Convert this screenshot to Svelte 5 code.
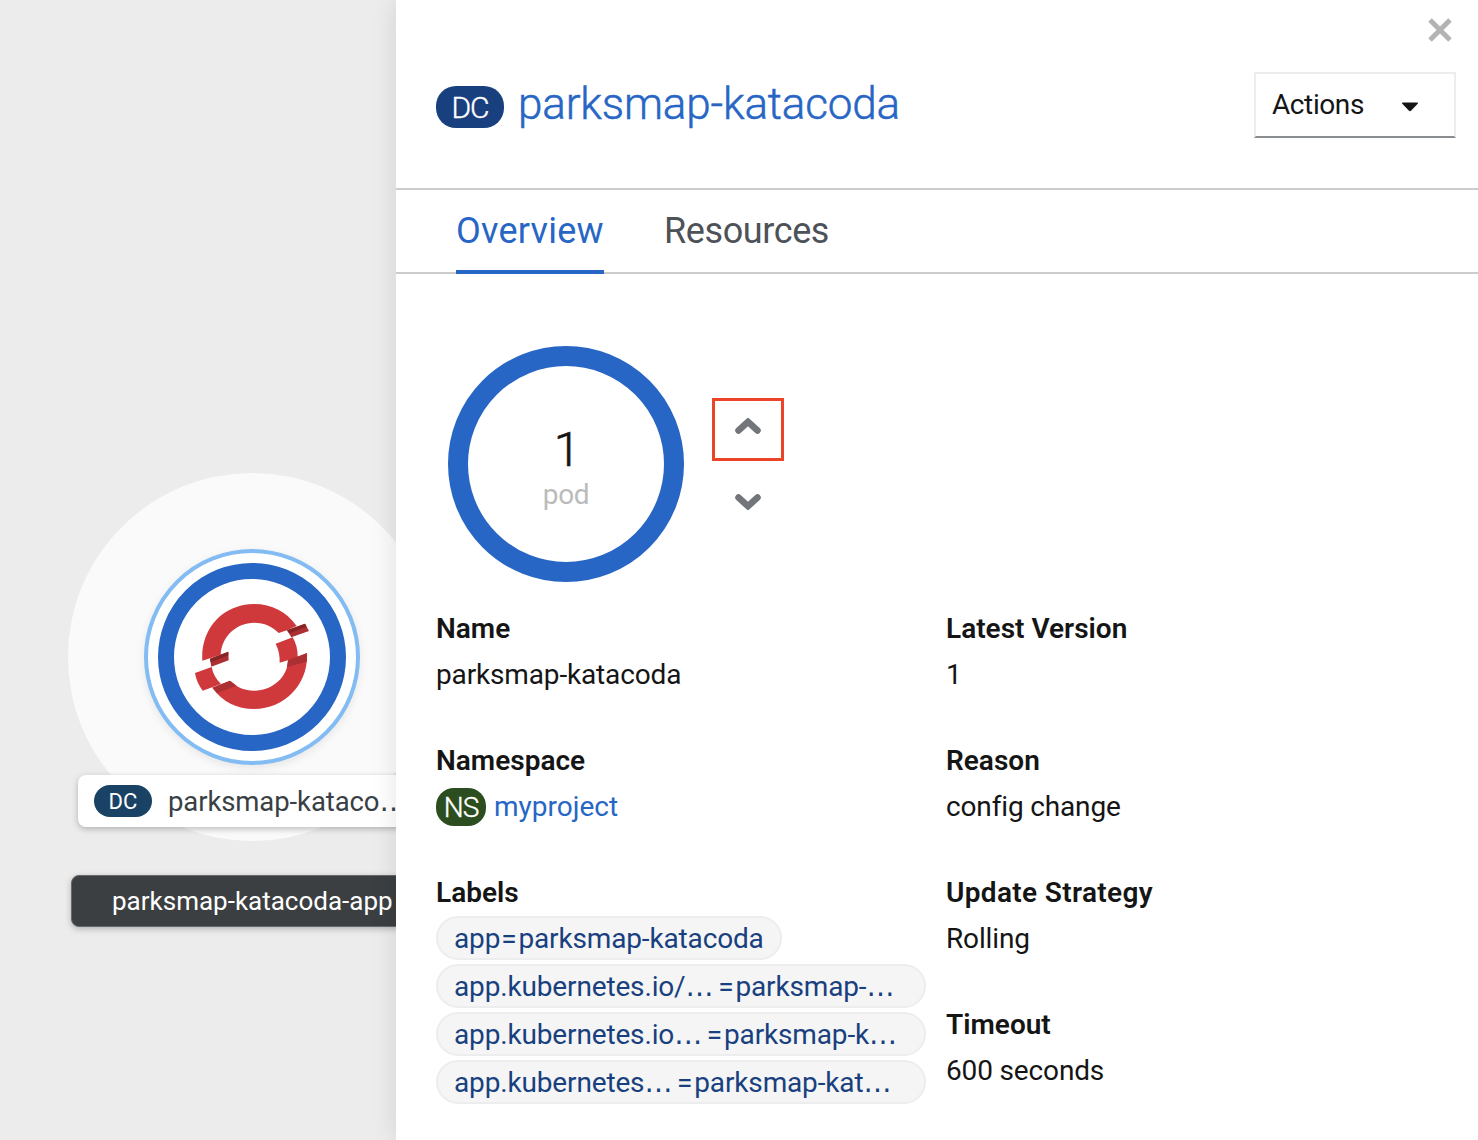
<script>
  const leftDetails = [
    { label: 'Name', value: 'parksmap-katacoda' },
    { label: 'Namespace', value: 'myproject', badge: 'NS' }
  ];
  const rightDetails = [
    { label: 'Latest Version', value: '1' },
    { label: 'Reason', value: 'config change' },
    { label: 'Update Strategy', value: 'Rolling', wide: true },
    { label: 'Timeout', value: '600 seconds' }
  ];
  const labels = [
    { key: 'app', value: 'parksmap-katacoda', truncated: false },
    { key: 'app.kubernetes.io/', value: 'parksmap-', truncated: true },
    { key: 'app.kubernetes.io', value: 'parksmap-k', truncated: true },
    { key: 'app.kubernetes', value: 'parksmap-kat', truncated: true }
  ];
</script>

<div class="page">
  <section class="topology">
    <svg class="graph" viewBox="0 0 396 1140" width="396" height="1140">
      <circle cx="252" cy="657" r="184" fill="#fafafa" />
      <circle class="node-base" cx="252" cy="657" r="106" fill="#fff" stroke="#83bbf3" stroke-width="4" />
      <circle cx="252" cy="657" r="86" fill="none" stroke="#2766c4" stroke-width="16" />
      <g transform="translate(130 540) scale(.33333)">
        <path fill="#cf393c" d="M217 362C211 270 276 192 373 192C425 192 470 215 500 258L471 271L446 279C427 259 403 248 373 248C318 248 275 290 272 344Z" />
        <path fill="#cf393c" d="M503 352L531 339C536 430 466 507 373 507C321 507 277 485 247 443L300 422C320 442 343 452 373 452C428 452 474 410 474 360Z" />
        <path fill="#cf393c" d="M437 311L488 292C498 309 504 329 503 352L449 368C450 347 446 329 437 311Z" />
        <path fill="#cf393c" d="M195 399L245 381C249 402 258 418 273 432L218 452C206 436 198 419 195 399Z" />
        <path fill="#ab2f33" d="M471 271L525 251L537 273L484 292Z" />
        <path fill="#882426" d="M471 271L525 251L530 260L478 280Z" />
        <path fill="#ab2f33" d="M474 360L531 339L530 365L471 381Z" />
        <path fill="#ab2f33" d="M240 356L295 335L296 361L244 380Z" />
        <path fill="#882426" d="M240 356L295 335L295 346L242 367Z" />
        <path fill="#ab2f33" d="M247 443L300 422L320 437L262 459Z" />
      </g>
    </svg>
    <div class="node-label">
      <span class="node-badge">DC</span>
      <span class="node-name">parksmap-kataco<span class="ellipsis">…</span></span>
    </div>
    <div class="group-label">parksmap-katacoda-app</div>
  </section>

  <aside class="panel">
    <header>
      <button class="close" aria-label="Close">
        <svg viewBox="0 0 24 24" width="24" height="24">
          <path d="M2 2L22 22M22 2L2 22" stroke="#b3b3b3" stroke-width="5" />
        </svg>
      </button>
      <div class="heading">
        <span class="badge dc">DC</span>
        <h1>parksmap-katacoda</h1>
        <button class="actions">
          <span>Actions</span>
          <svg viewBox="0 0 18 10" width="18" height="10">
            <path d="M1.6 .5H16.4Q17.6 .7 16.7 1.7L10 8.8Q9 9.7 8 8.8L1.3 1.7Q.4 .7 1.6 .5Z" fill="#151515" />
          </svg>
        </button>
      </div>
    </header>

    <nav>
      <span class="tab active">Overview</span>
      <span class="tab resources">Resources</span>
    </nav>

    <div class="scaling">
      <div class="donut">
        <span class="count">1</span>
        <span class="unit">pod</span>
      </div>
      <div class="steppers">
        <button class="step up" aria-label="Increase">
          <svg viewBox="0 0 26 16" width="26" height="16">
            <path d="M3.5 12.5L13 3.8L22.5 12.5" />
          </svg>
        </button>
        <button class="step" aria-label="Decrease">
          <svg viewBox="0 0 26 16" width="26" height="16">
            <path d="M3.5 3.5L13 12.2L22.5 3.5" />
          </svg>
        </button>
      </div>
    </div>

    <div class="details">
      <dl>
        {#each leftDetails as item}
          <div class="item">
            <dt>{item.label}</dt>
            {#if item.badge}
              <dd class="link"><span class="badge ns">{item.badge}</span><span>{item.value}</span></dd>
            {:else}
              <dd>{item.value}</dd>
            {/if}
          </div>
        {/each}
        <div class="item">
          <dt>Labels</dt>
          <dd class="chips">
            {#each labels as chip}
              <span class="chip" class:full={chip.truncated}>{chip.key}{#if chip.truncated}<span class="ellipsis">…</span>{' '}{/if}<span class="equals">=</span>{chip.value}{#if chip.truncated}<span class="ellipsis">…</span>{/if}</span>
            {/each}
          </dd>
        </div>
      </dl>
      <dl>
        {#each rightDetails as item}
          <div class="item">
            <dt class:wide={item.wide}>{item.label}</dt>
            <dd>{item.value}</dd>
          </div>
        {/each}
      </dl>
    </div>
  </aside>
</div>

<style>
  :global(body) {
    margin: 0;
    overflow: hidden;
  }
  .page {
    display: flex;
    width: 1478px;
    height: 1140px;
    overflow: hidden;
    background: #fff;
    color: #151515;
    font-family: Roboto, 'Liberation Sans', sans-serif;
    font-size: 28px;
    line-height: 42px;
  }
  .page * {
    box-sizing: border-box;
  }
  button {
    padding: 0;
    border: 0;
    background: none;
    font: inherit;
    color: inherit;
  }
  svg {
    display: block;
  }

  .topology {
    position: relative;
    flex: 0 0 396px;
    overflow: hidden;
    background: #ececec;
  }
  .node-base {
    filter: drop-shadow(0 3px 4px rgba(0, 0, 0, 0.08));
  }
  .node-label,
  .group-label {
    position: absolute;
    display: flex;
    align-items: center;
    height: 52px;
    white-space: nowrap;
  }
  .node-label {
    left: 78px;
    top: 775px;
    width: 346px;
    padding-left: 16px;
    gap: 16px;
    border-radius: 8px;
    background: #fff;
    box-shadow: 0 2px 6px rgba(0, 0, 0, 0.25);
    color: #393f44;
    font-size: 27.5px;
  }
  .node-badge {
    width: 58px;
    height: 32px;
    border-radius: 16px;
    background: #1a4264;
    color: #fff;
    font-size: 22px;
    line-height: 33px;
    text-align: center;
  }
  .node-name {
    padding-top: 2px;
    letter-spacing: -0.1px;
  }
  .ellipsis {
    margin-right: -3px;
    font-family: 'DejaVu Sans', sans-serif;
    font-size: 28px;
    line-height: 0;
  }
  .group-label {
    left: 71px;
    top: 875px;
    width: 360px;
    padding-left: 40px;
    border: 1px solid #66696c;
    border-radius: 8px;
    background: #3c3f42;
    box-shadow: 0 2px 6px rgba(0, 0, 0, 0.25);
    color: #fff;
    font-size: 26px;
  }

  .panel {
    position: relative;
    flex: 1;
    display: flex;
    flex-direction: column;
    background: #fff;
    box-shadow: 0 0 24px rgba(0, 0, 0, 0.11);
  }
  .panel > * {
    flex: none;
  }
  header {
    height: 190px;
    padding: 18px 22px 0 40px;
    border-bottom: 2px solid #ccc;
  }
  .close {
    display: block;
    margin: 0 4px 0 auto;
  }
  .heading {
    display: flex;
    align-items: flex-start;
    padding-top: 30px;
  }
  .badge {
    display: inline-block;
    color: #fff;
    font-weight: 300;
    text-align: center;
    -webkit-text-stroke: 0.4px currentColor;
  }
  .dc {
    width: 68px;
    height: 42px;
    margin-top: 14px;
    border-radius: 20px;
    background: #19407e;
    font-size: 30px;
    line-height: 43px;
    letter-spacing: -1px;
  }
  h1 {
    margin: 2px 0 0 14px;
    color: #2766c4;
    font-size: 44px;
    font-weight: 300;
    line-height: 60px;
    letter-spacing: -0.15px;
    -webkit-text-stroke: 0.5px currentColor;
  }
  .actions {
    display: flex;
    align-items: center;
    width: 202px;
    height: 66px;
    margin-left: auto;
    padding: 0 0 0 16px;
    border: 2px solid #ededed;
    border-bottom-color: #8a8d90;
  }
  .actions span {
    width: 129px;
    letter-spacing: -0.4px;
    text-align: left;
  }
  .actions svg {
    margin-top: 4px;
  }

  nav {
    display: flex;
    gap: 60px;
    height: 84px;
    padding-left: 60px;
    border-bottom: 2px solid #ccc;
    font-size: 36px;
    line-height: 82px;
  }
  .tab {
    height: 84px;
    color: #4d5258;
  }
  .active {
    width: 148px;
    border-bottom: 4px solid #2766c4;
    color: #2766c4;
    letter-spacing: 0.25px;
  }
  .resources {
    letter-spacing: -0.4px;
  }

  .scaling {
    display: flex;
    padding: 72px 0 0 52px;
  }
  .donut {
    display: flex;
    flex-direction: column;
    align-items: center;
    width: 236px;
    height: 236px;
    padding-top: 59px;
    border: 20px solid #2766c4;
    border-radius: 50%;
  }
  .count {
    padding-left: 2px;
    font-size: 48px;
    font-weight: 300;
    line-height: 50px;
    -webkit-text-stroke: 0.6px currentColor;
  }
  .unit {
    color: #bbb;
    line-height: 40px;
    letter-spacing: -0.4px;
  }
  .steppers {
    display: flex;
    flex-direction: column;
    gap: 9px;
    margin: 52px 0 0 28px;
  }
  .step {
    display: flex;
    justify-content: center;
    width: 72px;
    height: 63px;
    padding-top: 24px;
  }
  .step.up {
    padding-top: 17px;
    border: 3px solid #ec4428;
  }
  .step path {
    fill: none;
    stroke: #72767b;
    stroke-width: 6.5;
    stroke-linecap: round;
    stroke-linejoin: miter;
  }

  .details {
    display: grid;
    grid-template-columns: 490px 490px;
    gap: 20px;
    padding: 26px 0 0 40px;
  }
  dl {
    margin: 0;
  }
  .item {
    margin-bottom: 44px;
  }
  dt {
    height: 46px;
    font-weight: 600;
  }
  .wide {
    letter-spacing: 0.35px;
  }
  dd {
    height: 42px;
    margin: 0;
    letter-spacing: -0.15px;
  }
  .link {
    display: flex;
    align-items: center;
    gap: 8px;
    color: #2766c4;
    letter-spacing: 0;
  }
  .ns {
    width: 50px;
    height: 38px;
    border-radius: 18px;
    background: #2b4d20;
    line-height: 39px;
    letter-spacing: -1px;
  }
  .chips {
    display: flex;
    flex-direction: column;
    align-items: flex-start;
    gap: 4px;
    height: auto;
    margin-top: -2px;
  }
  .chip {
    height: 44px;
    padding: 0 16px;
    border: 2px solid #ededed;
    border-radius: 22px;
    background: #f5f5f5;
    color: #19407e;
    line-height: 42px;
    white-space: pre;
  }
  .equals {
    margin: 0 2px 0 1px;
  }
  .full {
    width: 490px;
  }
</style>
